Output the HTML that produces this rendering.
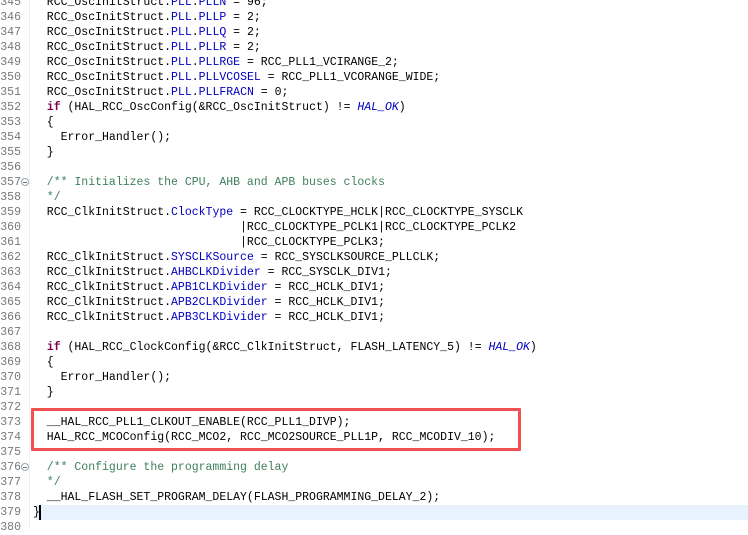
<!DOCTYPE html>
<html><head><meta charset="utf-8"><style>
html,body{margin:0;padding:0;background:#fff;width:748px;height:528px;overflow:hidden}
.wrap{position:absolute;left:0;top:-5px;width:748px}
.l{position:relative;height:15px;line-height:15px;font-family:"Liberation Mono",monospace;font-size:11.5px;white-space:pre}
.n{position:absolute;left:0;width:21px;text-align:right;color:#787878}
.c{position:absolute;left:33px;color:#000}
.k{color:#7f0055;font-weight:bold}
.f{color:#0000c0}
.g{color:#3f7f5f}
.i{color:#0000c0;font-style:italic}
.fold{position:absolute;left:21px;top:3px;width:8px;height:8px;border:1px solid #9aa4b0;border-radius:50%;box-sizing:border-box}
.fold:after{content:"";position:absolute;left:1px;top:2.5px;width:4px;height:1px;background:#6a7480}
.hl{background:#e8f2fe}
.gut{position:absolute;left:29px;top:0;width:1px;height:528px;background:#f0f0f0}
.box{position:absolute;left:31px;top:408px;width:490px;height:43px;border:3px solid #f05050;box-sizing:border-box;border-radius:1px}
.cur{position:absolute;left:39px;top:505px;width:2px;height:15px;background:#000}
</style></head><body>
<div class="gut"></div>
<div class="wrap">
<div class="l"><span class="n">345</span><span class="c">  RCC_OscInitStruct.<span class="f">PLL</span>.<span class="f">PLLN</span> = 96;</span></div>
<div class="l"><span class="n">346</span><span class="c">  RCC_OscInitStruct.<span class="f">PLL</span>.<span class="f">PLLP</span> = 2;</span></div>
<div class="l"><span class="n">347</span><span class="c">  RCC_OscInitStruct.<span class="f">PLL</span>.<span class="f">PLLQ</span> = 2;</span></div>
<div class="l"><span class="n">348</span><span class="c">  RCC_OscInitStruct.<span class="f">PLL</span>.<span class="f">PLLR</span> = 2;</span></div>
<div class="l"><span class="n">349</span><span class="c">  RCC_OscInitStruct.<span class="f">PLL</span>.<span class="f">PLLRGE</span> = RCC_PLL1_VCIRANGE_2;</span></div>
<div class="l"><span class="n">350</span><span class="c">  RCC_OscInitStruct.<span class="f">PLL</span>.<span class="f">PLLVCOSEL</span> = RCC_PLL1_VCORANGE_WIDE;</span></div>
<div class="l"><span class="n">351</span><span class="c">  RCC_OscInitStruct.<span class="f">PLL</span>.<span class="f">PLLFRACN</span> = 0;</span></div>
<div class="l"><span class="n">352</span><span class="c">  <span class="k">if</span> (HAL_RCC_OscConfig(&amp;RCC_OscInitStruct) != <span class="i">HAL_OK</span>)</span></div>
<div class="l"><span class="n">353</span><span class="c">  {</span></div>
<div class="l"><span class="n">354</span><span class="c">    Error_Handler();</span></div>
<div class="l"><span class="n">355</span><span class="c">  }</span></div>
<div class="l"><span class="n">356</span></div>
<div class="l"><span class="n">357</span><span class="fold"></span><span class="c g">  /** Initializes the CPU, AHB and APB buses clocks</span></div>
<div class="l"><span class="n">358</span><span class="c g">  */</span></div>
<div class="l"><span class="n">359</span><span class="c">  RCC_ClkInitStruct.<span class="f">ClockType</span> = RCC_CLOCKTYPE_HCLK|RCC_CLOCKTYPE_SYSCLK</span></div>
<div class="l"><span class="n">360</span><span class="c">                              |RCC_CLOCKTYPE_PCLK1|RCC_CLOCKTYPE_PCLK2</span></div>
<div class="l"><span class="n">361</span><span class="c">                              |RCC_CLOCKTYPE_PCLK3;</span></div>
<div class="l"><span class="n">362</span><span class="c">  RCC_ClkInitStruct.<span class="f">SYSCLKSource</span> = RCC_SYSCLKSOURCE_PLLCLK;</span></div>
<div class="l"><span class="n">363</span><span class="c">  RCC_ClkInitStruct.<span class="f">AHBCLKDivider</span> = RCC_SYSCLK_DIV1;</span></div>
<div class="l"><span class="n">364</span><span class="c">  RCC_ClkInitStruct.<span class="f">APB1CLKDivider</span> = RCC_HCLK_DIV1;</span></div>
<div class="l"><span class="n">365</span><span class="c">  RCC_ClkInitStruct.<span class="f">APB2CLKDivider</span> = RCC_HCLK_DIV1;</span></div>
<div class="l"><span class="n">366</span><span class="c">  RCC_ClkInitStruct.<span class="f">APB3CLKDivider</span> = RCC_HCLK_DIV1;</span></div>
<div class="l"><span class="n">367</span></div>
<div class="l"><span class="n">368</span><span class="c">  <span class="k">if</span> (HAL_RCC_ClockConfig(&amp;RCC_ClkInitStruct, FLASH_LATENCY_5) != <span class="i">HAL_OK</span>)</span></div>
<div class="l"><span class="n">369</span><span class="c">  {</span></div>
<div class="l"><span class="n">370</span><span class="c">    Error_Handler();</span></div>
<div class="l"><span class="n">371</span><span class="c">  }</span></div>
<div class="l"><span class="n">372</span></div>
<div class="l"><span class="n">373</span><span class="c">  __HAL_RCC_PLL1_CLKOUT_ENABLE(RCC_PLL1_DIVP);</span></div>
<div class="l"><span class="n">374</span><span class="c">  HAL_RCC_MCOConfig(RCC_MCO2, RCC_MCO2SOURCE_PLL1P, RCC_MCODIV_10);</span></div>
<div class="l"><span class="n">375</span></div>
<div class="l"><span class="n">376</span><span class="fold"></span><span class="c g">  /** Configure the programming delay</span></div>
<div class="l"><span class="n">377</span><span class="c g">  */</span></div>
<div class="l"><span class="n">378</span><span class="c">  __HAL_FLASH_SET_PROGRAM_DELAY(FLASH_PROGRAMMING_DELAY_2);</span></div>
<div class="l"><div class="hl" style="position:absolute;left:36px;right:0;top:0;height:15px"></div><span class="n">379</span><span class="c">}</span></div>
<div class="l"><span class="n">380</span></div>
</div>
<div class="cur"></div>
<div class="box"></div>
</body></html>
